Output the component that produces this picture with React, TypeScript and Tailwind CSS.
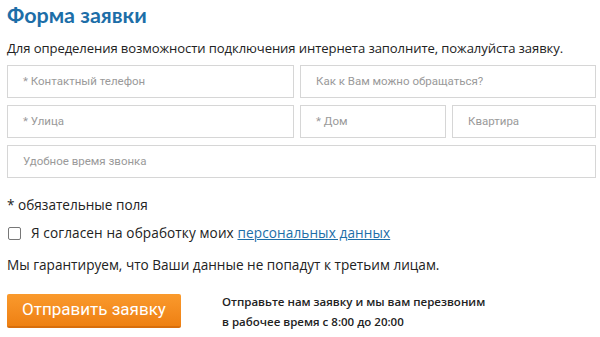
import React from "react";

const body = { fontFamily: '"Open Sans", "DejaVu Sans", sans-serif' };
const ph = { fontFamily: 'Roboto, "Liberation Sans", sans-serif' };

function Field({ text, className }: { text: string; className?: string }) {
  return (
    <div
      className={
        "h-[33px] border border-[#d6d6d6] bg-white flex items-center pl-[15px] text-[11.5px] text-[#9a9a9a] " +
        (className || "")
      }
      style={ph}
    >
      {text}
    </div>
  );
}

export default function App() {
  return (
    <div className="w-[600px] h-[337px] bg-white overflow-hidden pl-[7px] pr-[4px] text-[#222]" style={body}>
      <h1 className="text-[21.5px] font-bold text-[#1d6ea8] leading-[28px] pt-[1px]" style={{ fontFamily: 'Lato, "Open Sans", sans-serif' }}>
        Форма заявки
      </h1>
      <p className="text-[13.1px] leading-[18px] mt-[10px] tracking-[-0.1px]">
        Для определения возможности подключения интернета заполните, пожалуйста заявку.
      </p>
      <div className="mt-[8px] flex flex-col gap-[7px]">
        <div className="flex gap-[6px]">
          <Field text="* Контактный телефон" className="w-[287px]" />
          <Field text="Как к Вам можно обращаться?" className="flex-1" />
        </div>
        <div className="flex gap-[6px]">
          <Field text="* Улица" className="w-[287px]" />
          <Field text="* Дом" className="w-[146px]" />
          <Field text="Квартира" className="flex-1" />
        </div>
        <Field text="Удобное время звонка" className="w-full" />
      </div>
      <div className="text-[13.6px] leading-[18px] mt-[18px]">* обязательные поля</div>
      <div className="flex items-center mt-[10px] text-[13.6px] leading-[18px]">
        <span className="w-[13px] h-[13px] border border-[#777] rounded-[2px] bg-white ml-[1px]" />
        <span className="ml-[10px] tracking-[0.1px]">
          Я согласен на обработку моих{" "}
          <a className="text-[#1d6ea8] underline">персональных данных</a>
        </span>
      </div>
      <div className="text-[13.6px] leading-[18px] mt-[14px]">
        Мы гарантируем, что Ваши данные не попадут к третьим лицам.
      </div>
      <div className="flex mt-[20px]">
        <button
          className="w-[174px] h-[34px] rounded-[2px] bg-gradient-to-b from-[#fa9a2c] to-[#ee8012] border-b-2 border-[#d86e0c] text-white text-[17px] flex items-center justify-center"
          style={ph}
        >
          Отправить заявку
        </button>
        <div className="ml-[41px] text-[11.5px] leading-[20px] font-semibold mt-[-2px]">
          Отправьте нам заявку и мы вам перезвоним
          <br />в рабочее время с 8:00 до 20:00
        </div>
      </div>
    </div>
  );
}
